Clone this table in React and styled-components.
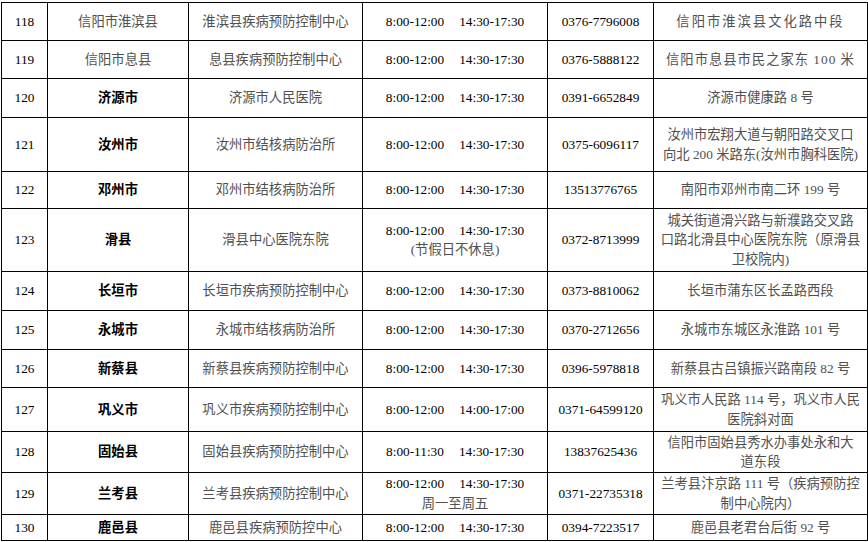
import styled, { createGlobalStyle } from 'styled-components'

const GlobalStyle = createGlobalStyle`
  html, body {
    margin: 0;
    padding: 0;
    background: #fff;
  }
`

const Sheet = styled.div`
  padding: 2px 0 0 1px;
`

const Table = styled.table`
  border-collapse: collapse;
  table-layout: fixed;
  width: 866px;
  font-family: "Liberation Serif", "Noto Sans CJK SC", serif;
  font-size: 13.3px;
  line-height: 19.5px;
  color: #000;
`

const Row = styled.tr`
  height: ${p => p.$h}px;
`

const Cell = styled.td`
  border: 1px solid #000;
  padding: 0 3px;
  text-align: center;
  vertical-align: middle;
  color: ${p => (p.$soft ? '#505050' : '#000')};
  font-weight: ${p => (p.$bold ? 700 : 400)};
  letter-spacing: ${p => p.$spread || 0}px;
  white-space: nowrap;
`

const HoursLine = styled.div`
  display: flex;
  justify-content: center;
  gap: 15px;
`

const Note = styled.div`
  color: #505050;
`

const widths = [46, 141, 174, 185, 106, 214]

const std = ['8:00-12:00', '14:30-17:30']

const rows = [
  { no: 118, h: 38, city: '信阳市淮滨县', org: '淮滨县疾病预防控制中心', hours: std, phone: '0376-7796008', addr: ['信阳市淮滨县文化路中段'], spread: 2 },
  { no: 119, h: 38, city: '信阳市息县', org: '息县疾病预防控制中心', hours: std, phone: '0376-5888122', addr: ['信阳市息县市民之家东 100 米'], spread: 1 },
  { no: 120, h: 39, city: '济源市', bold: true, org: '济源市人民医院', hours: std, phone: '0391-6652849', addr: ['济源市健康路 8 号'] },
  { no: 121, h: 54, city: '汝州市', bold: true, org: '汝州市结核病防治所', hours: std, phone: '0375-6096117', addr: ['汝州市宏翔大道与朝阳路交叉口', '向北 200 米路东(汝州市胸科医院)'] },
  { no: 122, h: 37, city: '邓州市', bold: true, org: '邓州市结核病防治所', hours: std, phone: '13513776765', addr: ['南阳市邓州市南二环 199 号'] },
  { no: 123, h: 63, city: '滑县', bold: true, org: '滑县中心医院东院', hours: std, note: '(节假日不休息)', phone: '0372-8713999', addr: ['城关街道滑兴路与新濮路交叉路', '口路北滑县中心医院东院（原滑县', '卫校院内)'] },
  { no: 124, h: 39, city: '长垣市', bold: true, org: '长垣市疾病预防控制中心', hours: std, phone: '0373-8810062', addr: ['长垣市蒲东区长孟路西段'] },
  { no: 125, h: 39, city: '永城市', bold: true, org: '永城市结核病防治所', hours: std, phone: '0370-2712656', addr: ['永城市东城区永淮路 101 号'] },
  { no: 126, h: 38, city: '新蔡县', bold: true, org: '新蔡县疾病预防控制中心', hours: std, phone: '0396-5978818', addr: ['新蔡县古吕镇振兴路南段 82 号'] },
  { no: 127, h: 44, city: '巩义市', bold: true, org: '巩义市疾病预防控制中心', hours: ['8:00-12:00', '14:00-17:00'], phone: '0371-64599120', addr: ['巩义市人民路 114 号，巩义市人民', '医院斜对面'] },
  { no: 128, h: 41, city: '固始县', bold: true, org: '固始县疾病预防控制中心', hours: ['8:00-11:30', '14:30-17:30'], phone: '13837625436', addr: ['信阳市固始县秀水办事处永和大', '道东段'] },
  { no: 129, h: 42, city: '兰考县', bold: true, org: '兰考县疾病预防控制中心', hours: std, note: '周一至周五', phone: '0371-22735318', addr: ['兰考县汴京路 111 号（疾病预防控', '制中心院内）'] },
  { no: 130, h: 26, city: '鹿邑县', bold: true, org: '鹿邑县疾病预防控中心', hours: std, phone: '0394-7223517', addr: ['鹿邑县老君台后街 92 号'] },
]

export default function App() {
  return (
    <Sheet>
      <GlobalStyle />
      <Table>
        <colgroup>
          {widths.map((w, i) => (
            <col key={i} style={{ width: w }} />
          ))}
        </colgroup>
        <tbody>
          {rows.map(r => (
            <Row key={r.no} $h={r.h}>
              <Cell>{r.no}</Cell>
              <Cell $bold={r.bold} $soft={!r.bold}>{r.city}</Cell>
              <Cell $soft>{r.org}</Cell>
              <Cell>
                <HoursLine>
                  <span>{r.hours[0]}</span>
                  <span>{r.hours[1]}</span>
                </HoursLine>
                {r.note && <Note>{r.note}</Note>}
              </Cell>
              <Cell>{r.phone}</Cell>
              <Cell $soft $spread={r.spread}>
                {r.addr.map((line, i) => (
                  <div key={i}>{line}</div>
                ))}
              </Cell>
            </Row>
          ))}
        </tbody>
      </Table>
    </Sheet>
  )
}
